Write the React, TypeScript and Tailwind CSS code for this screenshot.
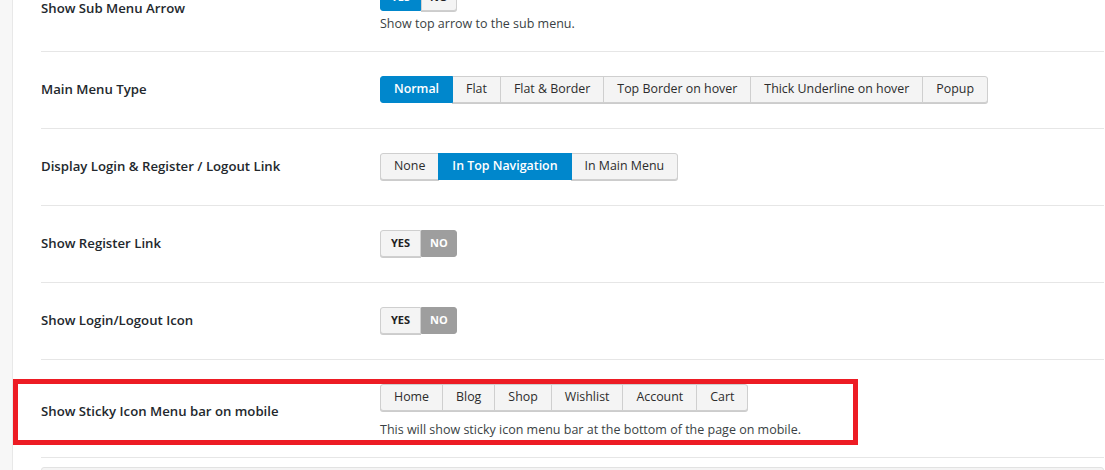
import type { ReactNode } from "react";

const FONT = "font-['Open_Sans','Noto_Sans',sans-serif]";

type Opt = { label: string; active?: boolean };

function ButtonGroup({ options }: { options: Opt[] }) {
  return (
    <div className="flex">
      {options.map((o, i) => (
        <span
          key={o.label}
          className={`h-[27px] flex items-center px-[13px] text-[12.4px] border shadow-[0_1px_0_#cccccc] ${
            i === 0 ? "rounded-l-[3px]" : "-ml-px"
          } ${i === options.length - 1 ? "rounded-r-[3px]" : ""} ${
            o.active
              ? "relative bg-[#0087cc] border-[#0087cc] text-white font-semibold shadow-none"
              : "bg-[#f4f4f4] border-[#cfcfcf] text-[#2c2c2c]"
          }`}
        >
          {o.label}
        </span>
      ))}
    </div>
  );
}

function YesNo({ yes }: { yes: boolean }) {
  return (
    <div className="flex">
      <span
        className={`h-[27px] flex items-center px-[10px] text-[11px] font-bold rounded-l-[3px] border ${
          yes
            ? "bg-[#0087cc] border-[#0087cc] text-white"
            : "bg-[#f4f4f4] border-[#cfcfcf] text-[#222] shadow-[0_1px_0_#cccccc]"
        }`}
      >
        YES
      </span>
      <span
        className={`h-[27px] flex items-center px-[8px] text-[11px] font-bold rounded-r-[3px] border ${
          yes
            ? "bg-[#f4f4f4] border-[#cfcfcf] text-[#222] shadow-[0_1px_0_#cccccc]"
            : "bg-[#9e9e9e] border-[#9e9e9e] text-white"
        }`}
      >
        NO
      </span>
    </div>
  );
}

function Row({
  label,
  children,
  desc,
}: {
  label: string;
  children: ReactNode;
  desc?: string;
}) {
  return (
    <div
      className={`flex items-center border-b border-[#e6e6e6] pt-6 ${
        desc ? "pb-[18px]" : "pb-[25px]"
      }`}
    >
      <div className="w-[339px] shrink-0 text-[13.2px] font-semibold text-[#23282d]">
        {label}
      </div>
      <div>
        {children}
        {desc && (
          <p className="mt-[10px] text-[12.5px] leading-[18px] text-[#3a3f44]">
            {desc}
          </p>
        )}
      </div>
    </div>
  );
}

export default function App() {
  return (
    <div className={`relative h-[470px] overflow-hidden bg-white flex ${FONT}`}>
      <div className="w-[13px] shrink-0 bg-[#f7f7f7] border-r border-[#e8e8e8]" />

      <div className="flex-1 pl-[28px] pr-px">
        <div className="-mt-[40px]">
          <div className="flex items-center border-b border-[#e6e6e6] pt-6 pb-[18px]">
            <div className="w-[339px] shrink-0 text-[13.2px] font-semibold text-[#23282d]">
              Show Sub Menu Arrow
            </div>
            <div>
              <YesNo yes />
              <p className="mt-[4px] text-[12.5px] leading-[18px] text-[#3a3f44]">
                Show top arrow to the sub menu.
              </p>
            </div>
          </div>

          <Row label="Main Menu Type">
            <ButtonGroup
              options={[
                { label: "Normal", active: true },
                { label: "Flat" },
                { label: "Flat & Border" },
                { label: "Top Border on hover" },
                { label: "Thick Underline on hover" },
                { label: "Popup" },
              ]}
            />
          </Row>

          <Row label="Display Login & Register / Logout Link">
            <ButtonGroup
              options={[
                { label: "None" },
                { label: "In Top Navigation", active: true },
                { label: "In Main Menu" },
              ]}
            />
          </Row>

          <Row label="Show Register Link">
            <YesNo yes={false} />
          </Row>

          <Row label="Show Login/Logout Icon">
            <YesNo yes={false} />
          </Row>

          <Row
            label="Show Sticky Icon Menu bar on mobile"
            desc="This will show sticky icon menu bar at the bottom of the page on mobile."
          >
            <ButtonGroup
              options={[
                { label: "Home" },
                { label: "Blog" },
                { label: "Shop" },
                { label: "Wishlist" },
                { label: "Account" },
                { label: "Cart" },
              ]}
            />
          </Row>

          <div className="mt-[9px] h-[40px] rounded-t-[3px] border border-[#e2e2e2] bg-[#f4f4f4]" />
        </div>
      </div>

      {/* annotation box */}
      <div className="absolute left-[13px] top-[379px] w-[845px] h-[66px] border-[5px] border-[#ed1c24]" />
    </div>
  );
}
